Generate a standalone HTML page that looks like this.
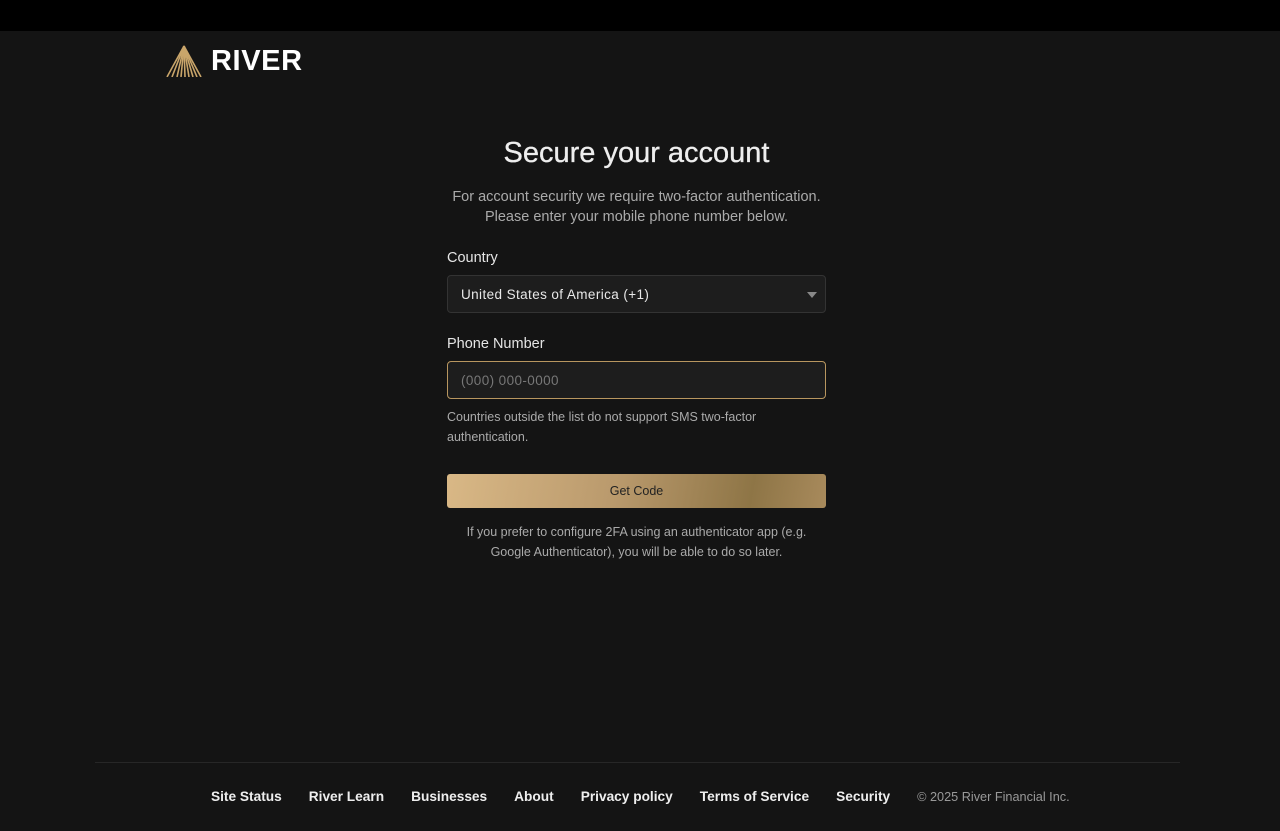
<!DOCTYPE html>
<html><head><meta charset="utf-8"><style>
*{box-sizing:border-box;margin:0;padding:0}
body{width:1280px;height:831px;background:#141414;font-family:"Liberation Sans",sans-serif;position:relative;overflow:hidden;color:#e8e8e8}
.top{position:absolute;left:0;top:0;width:1280px;height:31px;background:#000}
.logo{position:absolute;left:166px;top:45px;display:flex;align-items:center}
.logo span{font-weight:bold;font-size:29px;color:#fff;margin-left:9px;letter-spacing:0.6px;line-height:32px}
h1{position:absolute;top:137px;left:0;width:1273px;text-align:center;font-size:29px;font-weight:normal;color:#eee;-webkit-text-stroke:0.3px #eee}
.sub{position:absolute;top:187px;left:0;width:1273px;text-align:center;font-size:14.5px;line-height:20px;color:#aaa}
.lbl{position:absolute;left:447px;font-size:14.5px;color:#e5e5e5}
.box{position:absolute;left:447px;width:379px;height:38px;border-radius:4px;background:#1d1d1d;border:1px solid #333;font-size:13.5px;padding-left:13px;line-height:37px;letter-spacing:0.4px}
.note{position:absolute;left:447px;top:407px;width:379px;font-size:12.5px;line-height:20px;color:#aaa}
.btn{position:absolute;left:447px;top:474px;width:379px;height:34px;border-radius:3px;background:linear-gradient(100deg,#d9b886 0%,#b9996c 45%,#8e7546 80%,#a88a5c 100%);color:#222;font-size:12.5px;text-align:center;line-height:34px}
.note2{position:absolute;top:522px;left:0;width:1273px;text-align:center;font-size:12.5px;line-height:20px;color:#aaa}
.line{position:absolute;left:95px;top:762px;width:1085px;height:1px;background:#272727}
.foot{position:absolute;top:789px;left:211px;display:flex;align-items:baseline;font-size:13.7px;font-weight:bold;color:#eee;white-space:nowrap}
.foot a{margin-right:27px}
.foot .c{font-weight:normal;color:#999;font-size:12.7px}
</style></head><body>
<div class="top"></div>
<div class="logo"><svg width="36" height="32" viewBox="0 0 36 32"><g fill="none" stroke="#c9a56a" stroke-width="1.6"><path d="M18 1L1 32"/><path d="M18 1L35 32"/><path d="M18 1L6 32"/><path d="M18 1L11 32"/><path d="M18 1L15 32"/><path d="M18 1L19 32"/><path d="M18 1L23 32"/><path d="M18 1L27 32"/><path d="M18 1L31 32"/></g></svg><span>RIVER</span></div>
<h1>Secure your account</h1>
<div class="sub">For account security we require two-factor authentication.<br>Please enter your mobile phone number below.</div>
<div class="lbl" style="top:250px">Country</div>
<div class="box" style="top:275px">United States of America (+1)<svg style="position:absolute;right:8px;top:16px" width="10" height="7"><path d="M0 0H10L5 6Z" fill="#888"/></svg></div>
<div class="lbl" style="top:336px">Phone Number</div>
<div class="box" style="top:361px;border-color:#b8965f;color:#777">(000) 000-0000</div>
<div class="note">Countries outside the list do not support SMS two-factor authentication.</div>
<div class="btn">Get Code</div>
<div class="note2">If you prefer to configure 2FA using an authenticator app (e.g.<br>Google Authenticator), you will be able to do so later.</div>
<div class="line"></div>
<div class="foot"><a>Site Status</a><a>River Learn</a><a>Businesses</a><a>About</a><a>Privacy policy</a><a>Terms of Service</a><a>Security</a><span class="c">© 2025 River Financial Inc.</span></div>
</body></html>
